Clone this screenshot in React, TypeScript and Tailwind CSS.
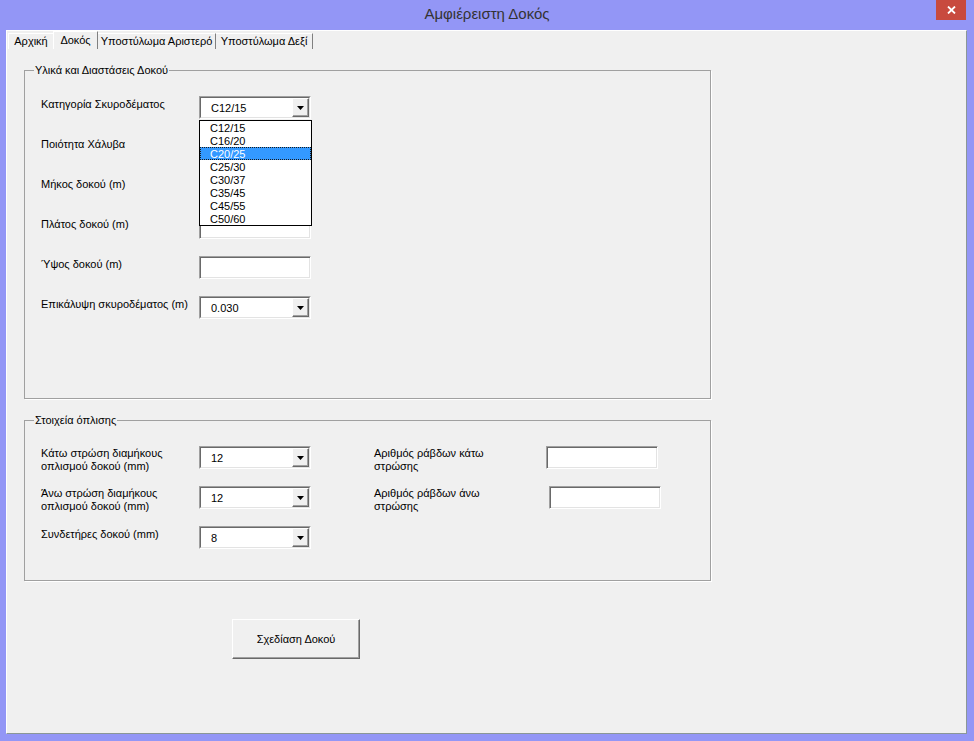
import React from "react";

function Arrow() {
  return (
    <svg width="7" height="4" viewBox="0 0 7 4">
      <polygon points="0,0 7,0 3.5,4" fill="#000" />
    </svg>
  );
}

function Combo({ value, children }: { value?: string; children?: React.ReactNode }) {
  return (
    <div className="relative h-[23px] w-[112px] shrink-0">
      <div className="flex h-full w-full border border-t-[#a0a0a0] border-l-[#a0a0a0] border-r-white border-b-white bg-white">
        <div className="flex flex-1 items-center border border-t-[#696969] border-l-[#696969] border-r-[#e3e3e3] border-b-[#e3e3e3] pl-[10px] text-[11px] leading-[13px]">
          <span className="flex-1 pt-[1px]">{value}</span>
          <span className="flex h-full w-[17px] items-center justify-center border border-t-white border-l-white border-r-[#696969] border-b-[#696969] bg-[#f0f0f0] shadow-[inset_-1px_-1px_0_#a0a0a0]">
            <Arrow />
          </span>
        </div>
      </div>
      {children}
    </div>
  );
}

function TextBox() {
  return (
    <div className="h-[23px] w-[112px] shrink-0 border border-t-[#a0a0a0] border-l-[#a0a0a0] border-r-white border-b-white bg-white shadow-[inset_1px_1px_0_#696969,inset_-1px_-1px_0_#e3e3e3]" />
  );
}

const grades = ["C12/15", "C16/20", "C20/25", "C25/30", "C30/37", "C35/45", "C45/55", "C50/60"];

function DropList() {
  return (
    <div className="absolute left-0 top-[24px] z-10 w-[113px] border border-black bg-white">
      {grades.map((g) =>
        g === "C20/25" ? (
          <div
            key={g}
            className="h-[13px] bg-[#3399ff] pl-[10px] text-[11px] leading-[15px] text-white outline outline-1 outline-dotted outline-offset-[-1px] outline-[#1a1a1a]"
          >
            {g}
          </div>
        ) : (
          <div key={g} className="h-[13px] pl-[10px] text-[11px] leading-[15px] text-black">
            {g}
          </div>
        )
      )}
    </div>
  );
}

function Label({ children }: { children: React.ReactNode }) {
  return <div className="w-[158px] shrink-0 pt-[2px] text-[11px] leading-[13px]">{children}</div>;
}

function Label2({ children }: { children: React.ReactNode }) {
  return <div className="w-[158px] shrink-0 pt-[1px] text-[11px] leading-[13px]">{children}</div>;
}

export default function App() {
  return (
    <div className="flex h-[741px] w-[974px] flex-col bg-[#9396f6] font-['Liberation_Sans',Arial,sans-serif] text-black">
      {/* title bar */}
      <div className="flex h-[30px] shrink-0">
        <div className="w-[38px]" />
        <div className="flex flex-1 items-center justify-center pb-[1px] text-[15px] text-[#333]">
          Αμφιέρειστη Δοκός
        </div>
        <div className="flex h-[20px] w-[30px] items-center justify-center bg-[#c84a3e]">
          <svg width="9" height="8" viewBox="0 0 9 8">
            <path d="M1 0.5 L8 7.5 M8 0.5 L1 7.5" stroke="#fff" strokeWidth="1.8" />
          </svg>
        </div>
        <div className="w-[8px]" />
      </div>

      {/* client */}
      <div className="ml-[6px] flex h-[704px] w-[961px] flex-col border border-t-white border-l-white border-r-[#8b9797] border-b-[#8b9797] bg-[#f0f0f0]">
        {/* tabs */}
        <div className="flex h-[18px] shrink-0 items-end pl-[1px] text-[11px] leading-[13px]">
          <div className="flex h-[16px] w-[45px] items-center justify-center border-l border-t border-l-white border-t-white">
            Αρχική
          </div>
          <div className="flex h-[18px] w-[45px] justify-center border-l border-t border-r border-l-white border-t-white border-r-[#808080] pt-[2px]">
            Δοκός
          </div>
          <div className="flex h-[16px] w-[118px] items-center justify-center border-t border-r border-t-white border-r-[#808080]">
            Υποστύλωμα Αριστερό
          </div>
          <div className="flex h-[16px] w-[97px] items-center justify-center border-t border-r border-t-white border-r-[#808080]">
            Υποστύλωμα Δεξί
          </div>
        </div>

        {/* frame 1 */}
        <div className="ml-[17px] mt-[21px] flex h-[329px] w-[687px] flex-col border border-[#a0a0a0] shadow-[1px_1px_0_#fff]">
          <span className="-mt-[7px] ml-[9px] w-fit bg-[#f0f0f0] px-[1px] text-[11px] leading-[13px]">
            Υλικά και Διαστάσεις Δοκού
          </span>
          <div className="flex flex-col pl-[16px] pt-[19px]">
            <div className="flex h-[40px]">
              <Label>Κατηγορία Σκυροδέματος</Label>
              <Combo value="C12/15">
                <DropList />
              </Combo>
            </div>
            <div className="flex h-[40px]">
              <Label>Ποιότητα Χάλυβα</Label>
              <Combo value="" />
            </div>
            <div className="flex h-[40px]">
              <Label>Μήκος δοκού (m)</Label>
              <TextBox />
            </div>
            <div className="flex h-[40px]">
              <Label>Πλάτος δοκού (m)</Label>
              <TextBox />
            </div>
            <div className="flex h-[40px]">
              <Label>Ύψος δοκού (m)</Label>
              <TextBox />
            </div>
            <div className="flex h-[40px]">
              <Label>Επικάλυψη σκυροδέματος (m)</Label>
              <Combo value="0.030" />
            </div>
          </div>
        </div>

        {/* frame 2 */}
        <div className="ml-[17px] mt-[21px] flex h-[161px] w-[687px] flex-col border border-[#a0a0a0] shadow-[1px_1px_0_#fff]">
          <span className="-mt-[7px] ml-[9px] w-fit bg-[#f0f0f0] px-[1px] text-[11px] leading-[13px]">
            Στοιχεία όπλισης
          </span>
          <div className="flex flex-col pl-[16px] pt-[19px]">
            <div className="flex h-[40px]">
              <Label2>
                Κάτω στρώση διαμήκους
                <br />
                οπλισμού δοκού (mm)
              </Label2>
              <Combo value="12" />
              <div className="ml-[63px] w-[172px] shrink-0 pt-[1px] text-[11px] leading-[13px]">
                Αριθμός ράβδων κάτω
                <br />
                στρώσης
              </div>
              <TextBox />
            </div>
            <div className="flex h-[40px]">
              <Label2>
                Άνω στρώση διαμήκους
                <br />
                οπλισμού δοκού (mm)
              </Label2>
              <Combo value="12" />
              <div className="ml-[63px] w-[175px] shrink-0 pt-[1px] text-[11px] leading-[13px]">
                Αριθμός ράβδων άνω
                <br />
                στρώσης
              </div>
              <TextBox />
            </div>
            <div className="flex h-[40px]">
              <Label>Συνδετήρες δοκού (mm)</Label>
              <Combo value="8" />
            </div>
          </div>
        </div>

        {/* button */}
        <div className="ml-[225px] mt-[38px] flex h-[40px] w-[128px] items-center justify-center border border-t-white border-l-white border-r-[#696969] border-b-[#696969] bg-[#f0f0f0] text-[11px] leading-[13px] shadow-[inset_-1px_-1px_0_#a0a0a0]">
          Σχεδίαση Δοκού
        </div>
      </div>
    </div>
  );
}
